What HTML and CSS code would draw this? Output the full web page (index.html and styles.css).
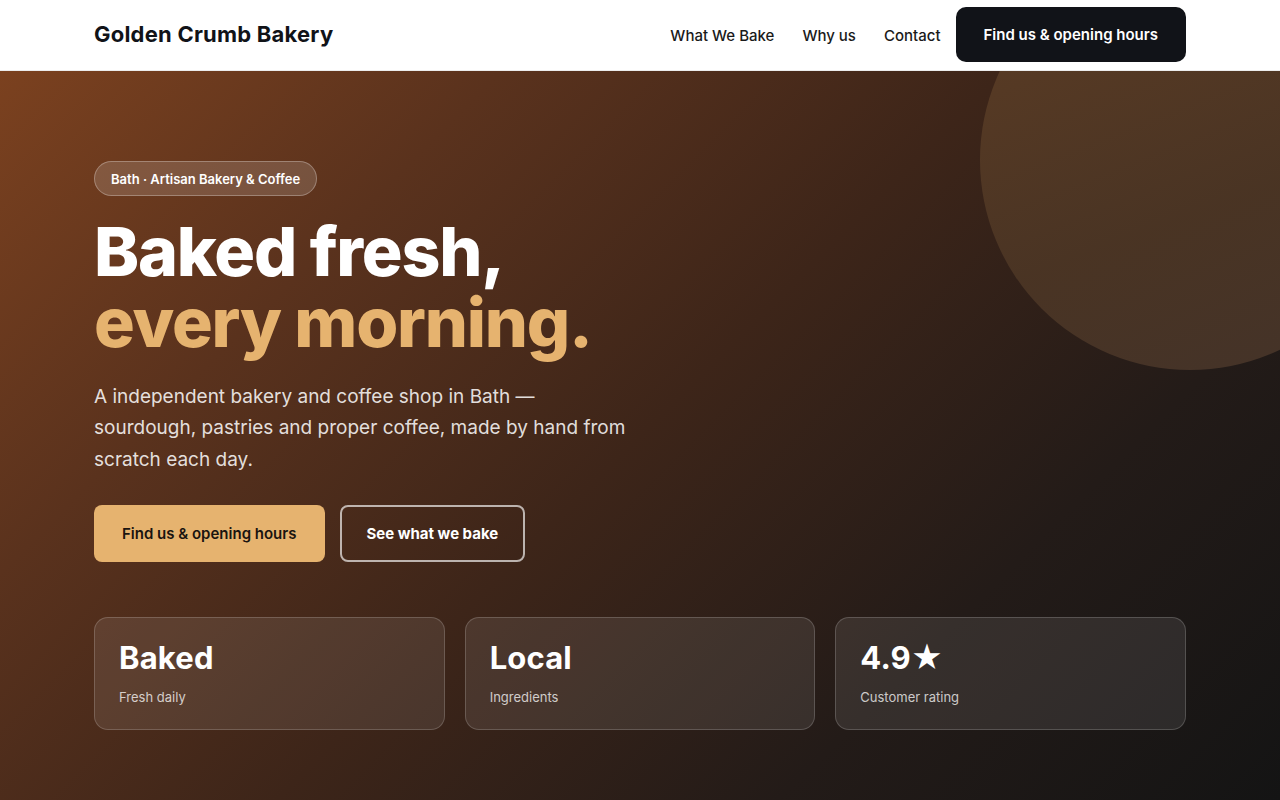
FILE: index.html
```html
<!DOCTYPE html>
<html lang="en">
<head>
<meta charset="utf-8">
<title>Golden Crumb Bakery</title>
<link rel="stylesheet" href="styles.css">
</head>
<body>
<header class="site-header">
  <div class="container header-inner">
    <a class="logo" href="#">Golden Crumb Bakery</a>
    <nav class="nav">
      <a href="#">What We Bake</a>
      <a href="#">Why us</a>
      <a href="#">Contact</a>
      <a class="nav-cta" href="#">Find us &amp; opening hours</a>
    </nav>
  </div>
</header>
<section class="hero">
  <div class="hero-circle"></div>
  <div class="container hero-inner">
    <span class="badge">Bath · Artisan Bakery &amp; Coffee</span>
    <h1 class="hero-title">Baked fresh,<br><span class="accent">every morning.</span></h1>
    <p class="hero-text">A independent bakery and coffee shop in Bath — sourdough, pastries and proper coffee, made by hand from scratch each day.</p>
    <div class="hero-actions">
      <a class="btn btn-primary" href="#">Find us &amp; opening hours</a>
      <a class="btn btn-outline" href="#">See what we bake</a>
    </div>
    <div class="stats">
      <div class="stat"><div class="stat-value">Baked</div><div class="stat-label">Fresh daily</div></div>
      <div class="stat"><div class="stat-value">Local</div><div class="stat-label">Ingredients</div></div>
      <div class="stat"><div class="stat-value">4.9★</div><div class="stat-label">Customer rating</div></div>
    </div>
  </div>
</section>
</body>
</html>
```
FILE: styles.css
```css
* { box-sizing: border-box; }
html, body { margin: 0; padding: 0; }
body {
  font-family: Inter, "Noto Sans", "Liberation Sans", sans-serif;
  color: #111318;
  background: #141414;
  height: 800px;
  overflow: hidden;
}
a { text-decoration: none; color: inherit; }
.container { width: 1092px; margin: 0 auto; }

.site-header {
  background: #fff;
  height: 71px;
  border-bottom: 1px solid #ececec;
}
.header-inner {
  height: 70px;
  display: flex;
  align-items: center;
  justify-content: space-between;
}
.logo {
  font-size: 22px;
  font-weight: 700;
  letter-spacing: 0.01em;
  color: #111318;
  margin-top: -2px;
}
.nav { display: flex; align-items: center; gap: 28px; }
.nav a { font-size: 15px; font-weight: 500; color: #1a1a1a; }
.nav .nav-cta {
  margin-left: -13px;
  margin-top: -2px;
  background: #111318;
  color: #fff;
  font-weight: 600;
  height: 55px;
  padding: 0 28px;
  border-radius: 10px;
  display: flex;
  align-items: center;
}

.hero {
  position: relative;
  overflow: hidden;
  height: 729px;
  background: linear-gradient(135deg, #7b411f 0%, #5a321d 25%, #3d2519 50%, #231b18 75%, #141414 100%);
}
.hero-circle {
  position: absolute;
  top: -121px;
  right: -120px;
  width: 420px;
  height: 420px;
  border-radius: 50%;
  background: linear-gradient(160deg, #5f3e25 0%, #4b3524 60%, #45342a 100%);
  opacity: 0.95;
}
.hero-inner {
  position: relative;
  padding-top: 90px;
  color: #fff;
}
.badge {
  display: inline-flex;
  align-items: center;
  height: 35px;
  padding: 0 16px;
  border-radius: 999px;
  background: rgba(255,255,255,0.15);
  border: 1px solid rgba(255,255,255,0.28);
  font-size: 13px;
  font-weight: 600;
  color: #fff;
}
.hero-title {
  margin: 20px 0 0;
  font-size: 68px;
  line-height: 1.05;
  font-weight: 800;
  letter-spacing: -0.018em;
  color: #fff;
}
.accent { color: #e6b36f; }
.hero-text {
  margin: 22px 0 0;
  max-width: 545px;
  font-size: 19px;
  line-height: 1.66;
  color: rgba(255,255,255,0.86);
}
.hero-actions {
  margin-top: 30px;
  display: flex;
  gap: 15px;
}
.btn {
  height: 57px;
  display: inline-flex;
  align-items: center;
  border-radius: 8px;
  font-size: 15px;
  font-weight: 600;
  padding-bottom: 1px;
}
.btn-primary {
  background: #e6b36f;
  color: #1a1410;
  padding-left: 28px;
  padding-right: 28px;
}
.btn-outline {
  border: 2px solid rgba(255,255,255,0.65);
  color: #fff;
  padding-left: 25px;
  padding-right: 25px;
  font-weight: 700;
}
.stats {
  margin-top: 55px;
  display: grid;
  grid-template-columns: repeat(3, 1fr);
  gap: 20px;
}
.stat {
  height: 113px;
  padding: 21px 24px;
  border-radius: 14px;
  background: rgba(255,255,255,0.09);
  border: 1px solid rgba(255,255,255,0.18);
}
.stat-value {
  font-size: 31px;
  font-weight: 700;
  line-height: 1.2;
  letter-spacing: 0.005em;
  color: #fff;
}
.stat-label {
  margin-top: 12px;
  font-size: 13px;
  color: rgba(255,255,255,0.75);
}
```
